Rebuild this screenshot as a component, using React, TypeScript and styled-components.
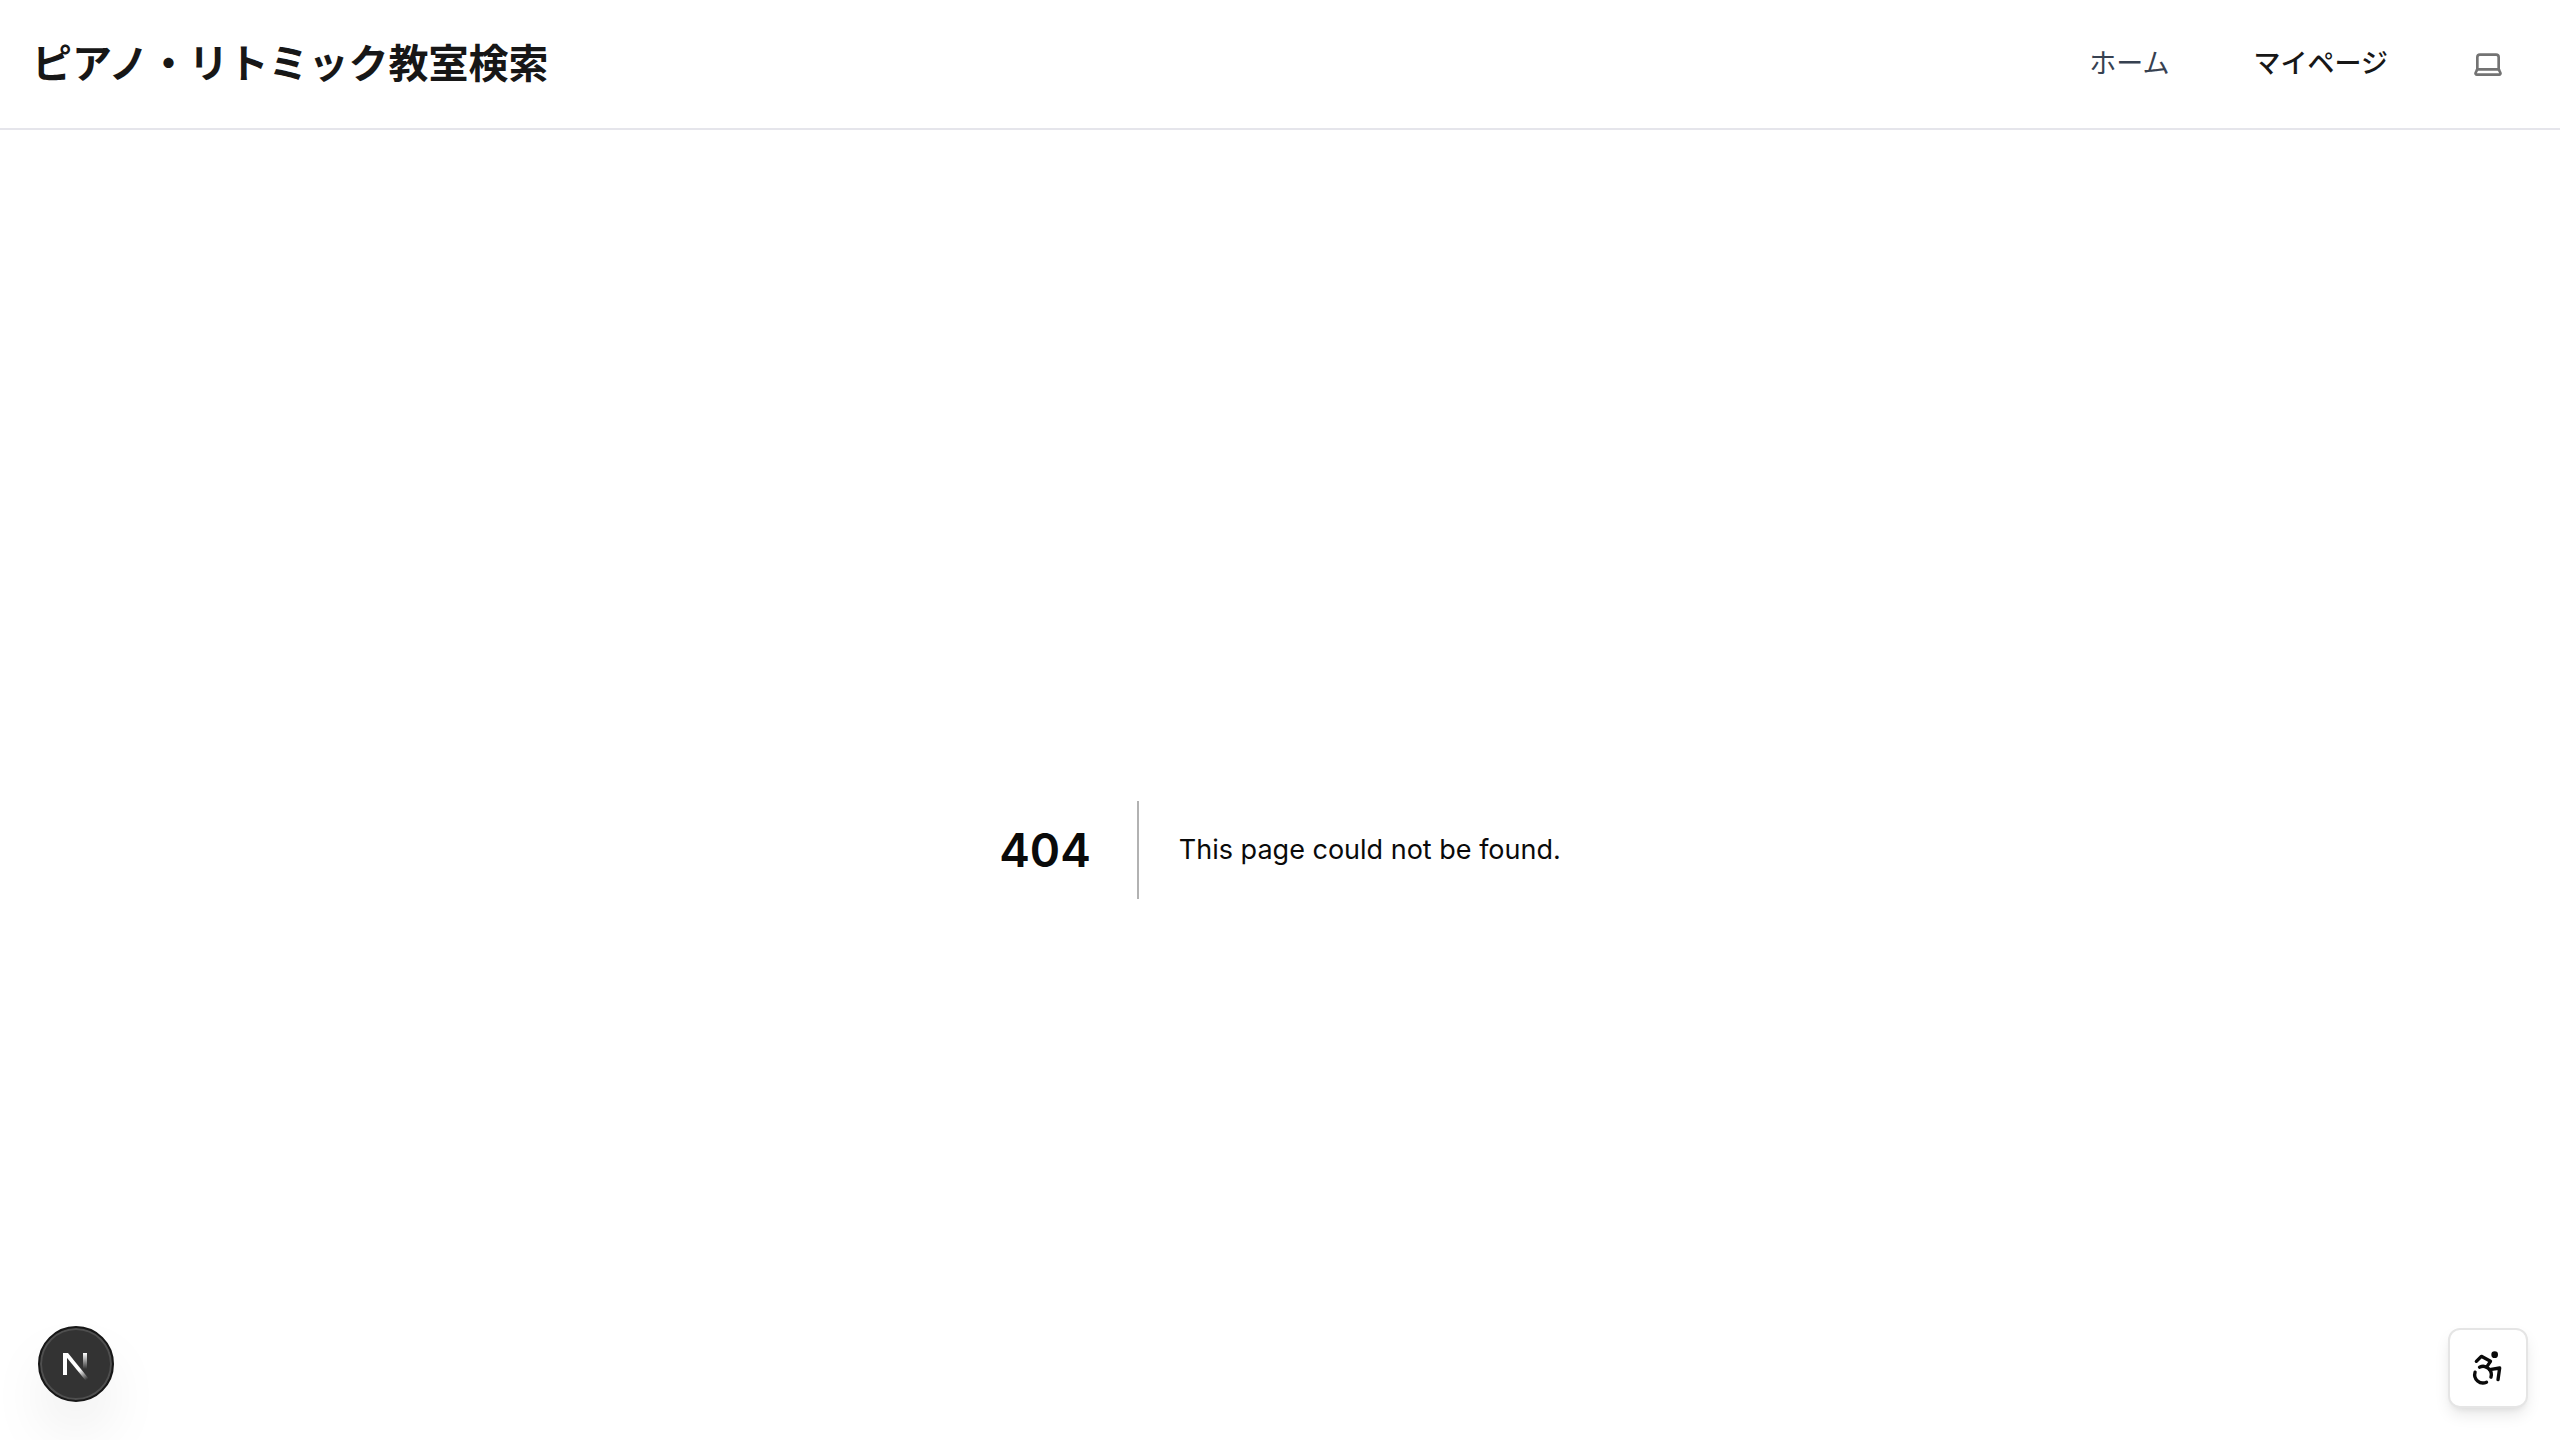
import React from "react";
import styled, { createGlobalStyle } from "styled-components";
import { Accessibility, Laptop } from "lucide-react";

const GlobalStyle = createGlobalStyle`
  *, *::before, *::after { box-sizing: border-box; }
  html, body, #root { height: 100%; }
  body {
    margin: 0;
    background: #ffffff;
    color: #0a0a0a;
    font-family: Inter, "Noto Sans CJK JP", sans-serif;
  }
`;

const Page = styled.div`
  display: flex;
  flex-direction: column;
  min-height: 100%;
`;

const Header = styled.header`
  display: flex;
  align-items: center;
  justify-content: space-between;
  height: 130px;
  padding: 0 32px;
  border-bottom: 2px solid #e5e5eb;
`;

const SiteTitle = styled.a`
  color: #171717;
  font-size: 40px;
  font-weight: 700;
  line-height: 56px;
  text-decoration: none;
`;

const Nav = styled.nav`
  display: flex;
  align-items: center;
  gap: 28px;
`;

const Links = styled.div`
  display: flex;
  gap: 20px;
`;

const NavLink = styled.a<{ $strong?: boolean }>`
  padding: 16px 32px;
  color: ${(p) => (p.$strong ? "#171717" : "#374151")};
  font-size: 27px;
  font-weight: ${(p) => (p.$strong ? 500 : 400)};
  line-height: 40px;
  text-decoration: none;
`;

const ThemeButton = styled.button`
  display: flex;
  align-items: center;
  justify-content: center;
  width: 80px;
  height: 72px;
  padding: 0;
  border: 0;
  background: transparent;
  color: #737373;
`;

const Main = styled.main`
  display: flex;
  flex: 1;
  align-items: center;
  justify-content: center;
  padding-top: 130px;
`;

const Code = styled.h1`
  margin: 0 40px 0 0;
  padding-right: 46px;
  border-right: 2px solid rgba(0, 0, 0, 0.3);
  font-size: 46px;
  font-weight: 600;
  line-height: 98px;
`;

const Message = styled.h2`
  margin: 0;
  font-size: 27px;
  font-weight: 400;
  line-height: 56px;
`;

const DevButton = styled.button`
  position: fixed;
  left: 38px;
  bottom: 38px;
  display: flex;
  align-items: center;
  justify-content: center;
  width: 76px;
  height: 76px;
  padding: 0;
  border: 2px solid #171717;
  border-radius: 50%;
  background: #333333;
  box-shadow: inset 0 0 0 2px #4f4f4f, 0 32px 64px -16px rgba(0, 0, 0, 0.18);
`;

const AccessButton = styled.button`
  position: fixed;
  right: 32px;
  bottom: 32px;
  display: flex;
  align-items: center;
  justify-content: center;
  width: 80px;
  height: 80px;
  padding: 0;
  border: 2px solid #e5e5e5;
  border-radius: 12px;
  background: #ffffff;
  color: #0a0a0a;
  box-shadow: 0 8px 16px -2px rgba(0, 0, 0, 0.1), 0 4px 8px -4px rgba(0, 0, 0, 0.1);
`;

function NextMark() {
  return (
    <svg width="40" height="40" viewBox="0 0 40 40" fill="none" aria-hidden="true">
      <defs>
        <linearGradient id="diagonal" x1="20" y1="20" x2="32" y2="36" gradientUnits="userSpaceOnUse">
          <stop offset="0.35" stopColor="#fff" />
          <stop offset="0.95" stopColor="#fff" stopOpacity="0" />
        </linearGradient>
        <linearGradient id="stem" x1="28" y1="9" x2="28" y2="25" gradientUnits="userSpaceOnUse">
          <stop stopColor="#fff" />
          <stop offset="1" stopColor="#fff" stopOpacity="0" />
        </linearGradient>
      </defs>
      <path d="M9 31V9" stroke="#fff" strokeWidth="4" />
      <path d="M7 9H12L33 35L30 37L7 9Z" fill="url(#diagonal)" />
      <path d="M29 9V25" stroke="url(#stem)" strokeWidth="4" />
    </svg>
  );
}

export default function App() {
  return (
    <>
      <GlobalStyle />
      <Page>
        <Header>
          <SiteTitle href="#">ピアノ・リトミック教室検索</SiteTitle>
          <Nav>
            <Links>
              <NavLink href="#">ホーム</NavLink>
              <NavLink href="#" $strong>マイページ</NavLink>
            </Links>
            <ThemeButton type="button" aria-label="Theme">
              <Laptop size={32} />
            </ThemeButton>
          </Nav>
        </Header>
        <Main>
          <Code>404</Code>
          <Message>This page could not be found.</Message>
        </Main>
      </Page>
      <DevButton type="button" aria-label="Developer tools">
        <NextMark />
      </DevButton>
      <AccessButton type="button" aria-label="Accessibility">
        <Accessibility size={40} />
      </AccessButton>
    </>
  );
}
